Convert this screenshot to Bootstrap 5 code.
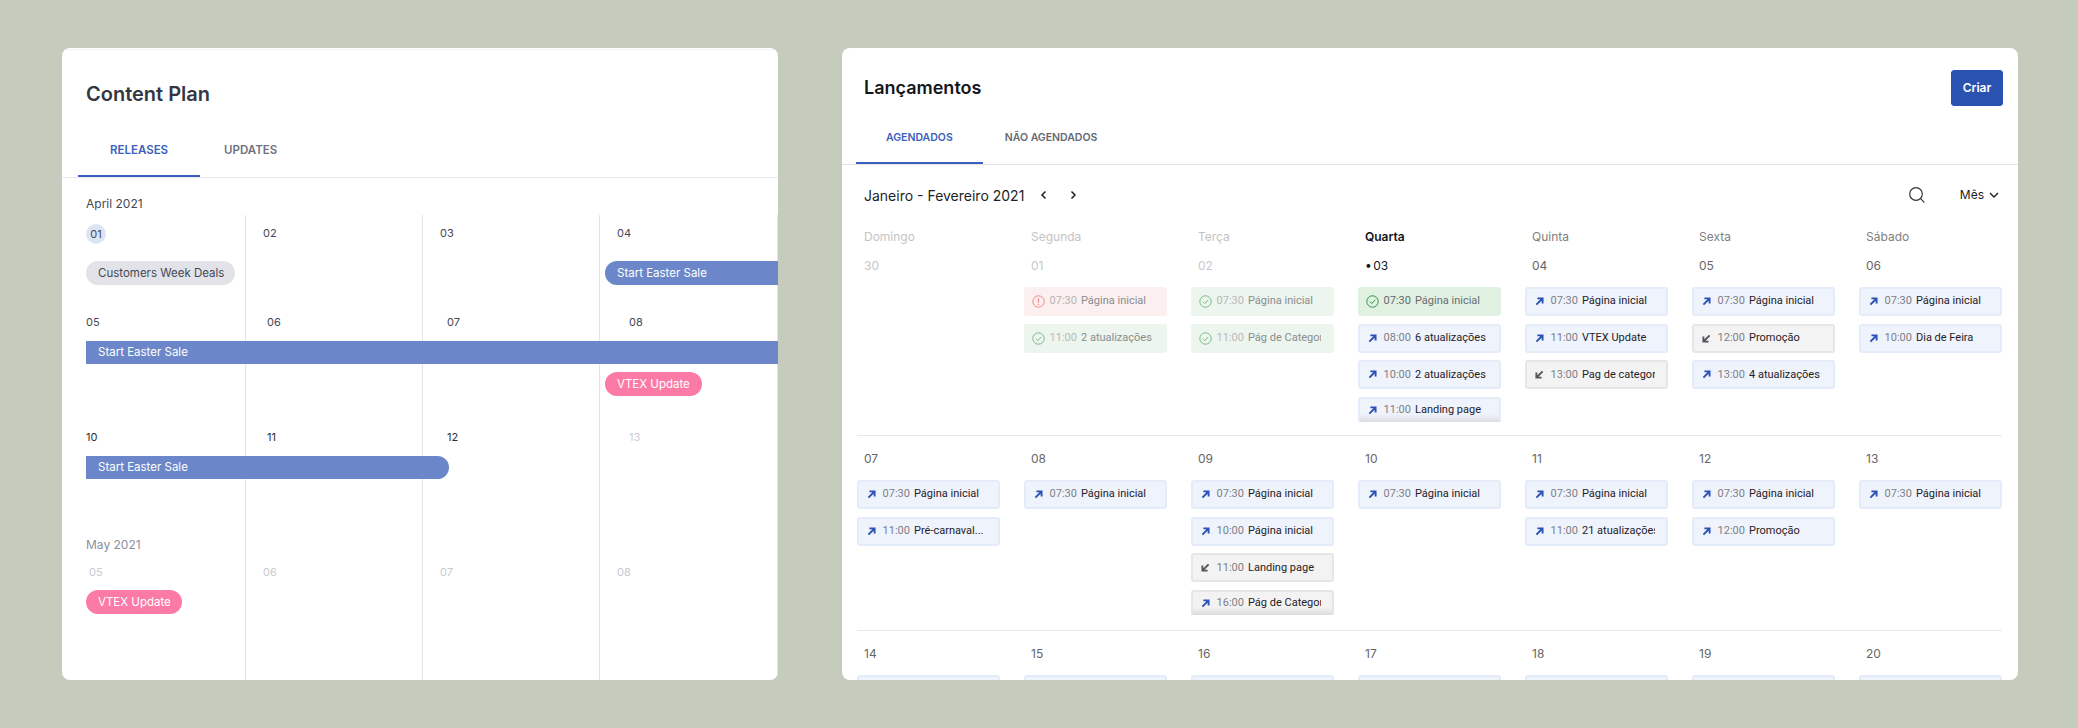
<!DOCTYPE html>
<html lang="en">
<head>
  <meta charset="UTF-8" />
  <title>Content Plan / Lançamentos</title>
  <link href="https://cdn.jsdelivr.net/npm/bootstrap@5.3.3/dist/css/bootstrap.min.css" rel="stylesheet" />
  <style>
    body {
      background-color: #c6ccbd;
      font-family: Inter, "Liberation Sans", sans-serif;
      font-size: 11.5px;
      margin: 0;
      height: 728px;
      overflow: hidden;
      padding: 48px 60px 48px 62px;
      gap: 64px;
    }
    .pn {
      height: 632px;
      border: 0;
      border-radius: 8px;
      overflow: hidden;
      background: #fff;
      flex: none;
    }
    .pn > * { flex: none; }
    .pn-left { width: 716px; }
    .pn-right { width: 1176px; }

    /* tabs */
    .tab-bar { border-bottom: 1px solid #e8e9ee; }
    .tab-lnk {
      font-size: 11.5px;
      line-height: 14px;
      font-weight: 600;
      color: #6f7280;
      border-bottom: 2px solid transparent;
    }
    .tab-lnk.on { color: #3a5fbe; border-bottom-color: #3a5fbe; }

    /* left panel */
    .left-title {
      font-size: 20px;
      line-height: 24px;
      font-weight: 600;
      color: #333743;
      margin: 0;
      padding: 32px 0 0 24px;
      border-top: 1px solid #f1f2f6;
      margin-top: 1px;
    }
    .pn-left .tab-bar { padding-left: 16px; padding-top: 37px; }
    .pn-left .tab-lnk { padding: 0 32px 18px; }
    .pn-left .tab-lnk + .tab-lnk { padding-left: 24px; }
    .month-h { font-size: 12px; line-height: 18px; color: #444854; padding-left: 24px; }
    .month-h.first { margin: 17px 0 2px; }
    .plan-grid {
      display: grid;
      grid-template-columns: 184px 177px 177px 178px;
      grid-template-rows: 46px 24px 56px 23px 32px 60px 23px 76px 35px 24px 66px;
      height: 465px;
    }
    .v-line { grid-row: 1 / -1; border-right: 1px solid #e4e5ea; }
    .v-1 { grid-column: 1; }
    .v-2 { grid-column: 2; }
    .v-3 { grid-column: 3; }
    .v-4 { grid-column: 4; }
    .pd { line-height: 18px; color: #444854; position: relative; font-size: 11px; }
    .pd.dim { color: #c9cad0; }
    .pd.dark { color: #2b2e38; }
    .pd-r1 { grid-row: 1; padding-top: 9px; }
    .pd-r2 { grid-row: 3; padding-top: 28px; }
    .pd-r3 { grid-row: 6; padding-top: 32px; }
    .pd-r4 { grid-row: 9; padding-top: 8px; }
    .c1 { grid-column: 1; padding-left: 24px; }
    .c2 { grid-column: 2; padding-left: 17px; }
    .c3 { grid-column: 3; padding-left: 17px; }
    .c4 { grid-column: 4; padding-left: 17px; }
    .c2w { grid-column: 2; padding-left: 21px; }
    .c3w { grid-column: 3; padding-left: 24px; }
    .c4w { grid-column: 4; padding-left: 29px; }
    .today-dot {
      display: inline-block;
      width: 20px;
      height: 20px;
      line-height: 20px;
      text-align: center;
      border-radius: 50%;
      background: #dde5f5;
      font-size: 11px;
    }
    .pd-today { grid-row: 1; grid-column: 1; padding: 9px 0 0 24px; line-height: 20px; color: #444854; }
    .bar {
      height: 24px;
      line-height: 24px;
      padding-left: 12px;
      color: #fff;
      white-space: nowrap;
      position: relative;
    }
    .bar-blue { background: #6b87c9; }
    .bar-pink { background: #fb7aa6; border-radius: 12px; }
    .bar-grey { background: #e2e3e8; color: #444854; border-radius: 12px; }
    .bar-end { border-radius: 0 12px 12px 0; }
    .bar-start { border-radius: 12px 0 0 12px; }

    /* right panel */
    .right-title { font-size: 18px; line-height: 24px; font-weight: 600; color: #14161c; margin: 0; }
    .right-head { padding: 22px 15px 0 22px; }
    .btn-criar {
      width: 52px;
      height: 36px;
      padding: 0;
      font-size: 12px;
      font-weight: 600;
      background: #2a52b0;
      border-color: #2a52b0;
      border-radius: 3px;
    }
    .pn-right .tab-bar { padding: 25px 0 0 14px; border-bottom-color: #e4e4e4; }
    .pn-right .tab-lnk { padding: 0 30px 17px; font-size: 10.5px; }
    .pn-right .tab-lnk + .tab-lnk { padding-left: 22px; color: #666a72; }
    .tool-row { height: 60px; padding: 0 18px 0 22px; }
    .range-txt { font-size: 14px; color: #1c1e24; margin-right: 10px; }
    .mes-txt { font-size: 12px; color: #1c1e24; }
    .week-grid {
      display: grid;
      grid-template-columns: repeat(7, 143px);
      column-gap: 24px;
      margin-left: 15px;
      width: 1145px;
    }
    .wd { font-size: 12px; line-height: 16px; padding: 4px 0 0 7px; color: #808080; height: 20px; box-sizing: border-box; }
    .wd.dim { color: #c4c4c4; }
    .wd.now { color: #14161c; font-weight: 600; }
    .wk-row {
      grid-column: 1 / -1;
      display: grid;
      grid-template-columns: subgrid;
      border-bottom: 1px solid #e9e9e9;
      align-content: start;
    }
    .wk-1 { height: 191px; }
    .wk-2 { height: 195px; }
    .wk-3 { border-bottom: 0; }
    .day { font-size: 12px; line-height: 16px; color: #666; padding-left: 7px; margin-bottom: 13px; }
    .wk-1 .day { padding-top: 13px; }
    .wk-2 .day, .wk-3 .day { padding-top: 15px; }
    .day.dim { color: #c8c8c8; }
    .day.now { color: #14161c; word-spacing: -2px; }
    .ev {
      height: 29px;
      margin-bottom: 7.7px;
      border: 2px solid #e3ecf8;
      background: #eff3fc;
      border-radius: 3px;
      padding-left: 6px;
      font-family: Roboto, "Liberation Sans", sans-serif;
      font-size: 11px;
      color: #1f2127;
      white-space: nowrap;
      overflow: hidden;
    }
    .ev-ico { width: 13px; height: 13px; flex: none; color: #2c52b5; }
    .ev-t { width: 31.4px; margin-left: 4.6px; flex: none; color: #7d7f85; }
    .ev-n { width: 73px; flex: none; overflow: hidden; }
    .ev-grey { background: #f3f3f3; border-color: #e6e6e6; }
    .ev-grey .ev-ico { color: #55575c; }
    .ev-grey .ev-ico.bl { color: #2c52b5; }
    .ev-ok { background: #ecf5ee; border-color: #ecf5ee; color: #8b8d8f; }
    .ev-ok .ev-t { color: #b7bab8; }
    .ev-ok .ev-ico { color: #79bb87; }
    .ev-err { background: #fbefef; border-color: #fbefef; color: #8b8d8f; }
    .ev-err .ev-t { color: #b7b4b4; }
    .ev-err .ev-ico { color: #ee8a8a; }
    .ev-now { background: #e0f1e2; border-color: #e0f1e2; color: #6b6d70; }
    .ev-now .ev-t { color: #66686b; }
    .ev-now .ev-ico { color: #2e9447; }
    .ev-cut { height: 25px; margin-bottom: 0; border-bottom: 0; border-radius: 3px 3px 0 0; box-shadow: inset 0 -8px 6px -5px #d6d7da; }

    /* where the plan bars sit on the grid */
    .plan-item-a { grid-row: 2; grid-column: 1; margin-left: 24px; width: 149px; }
    .plan-item-b { grid-row: 2; grid-column: 4; margin-left: 5px; }
    .plan-item-c { grid-row: 4; grid-column: 1 / -1; margin-left: 24px; height: 23px; line-height: 23px; }
    .plan-item-d { grid-row: 5; grid-column: 4; margin: 8px 0 0 5px; width: 97px; }
    .plan-item-e { grid-row: 7; grid-column: 1 / 4; margin-left: 24px; width: 363px; height: 23px; line-height: 23px; }
    .plan-item-f { grid-row: 8; grid-column: 1 / 3; padding-top: 56px; line-height: 20px; color: #8c8f9c; position: relative; }
    .plan-item-g { padding-left: 27px; }
    .plan-item-h { grid-row: 10; grid-column: 1; margin-left: 24px; width: 96px; }
    .chev-next { margin-left: 17px; }
    .srch { margin-right: 34px; }
  </style>
</head>
<body class="d-flex">

  <svg width="0" height="0" class="d-none">
    <symbol id="i-up" viewBox="0 0 13 13"><path d="M3.4 9.6L9 4M4.4 3.4h5.2v5.2" fill="none" stroke="currentColor" stroke-width="1.9"/></symbol>
    <symbol id="i-down" viewBox="0 0 13 13"><path d="M9.6 3.4L4 9M3.4 4.4v5.2h5.2" fill="none" stroke="currentColor" stroke-width="1.9"/></symbol>
    <symbol id="i-ok" viewBox="0 0 13 13"><circle cx="6.5" cy="6.5" r="5.7" fill="none" stroke="currentColor" stroke-width="1"/><path d="M3.9 6.7l1.9 1.9 3.4-3.7" fill="none" stroke="currentColor" stroke-width="1"/></symbol>
    <symbol id="i-err" viewBox="0 0 13 13"><circle cx="6.5" cy="6.5" r="5.7" fill="none" stroke="currentColor" stroke-width="1"/><path d="M6.5 3.2v4.2M6.5 8.7v1.2" fill="none" stroke="currentColor" stroke-width="1.2"/></symbol>
  </svg>

  <!-- Content Plan -->
  <div class="card pn pn-left">
    <h1 class="left-title">Content Plan</h1>
    <div class="nav tab-bar">
      <a class="nav-link tab-lnk on" href="#">RELEASES</a>
      <a class="nav-link tab-lnk" href="#">UPDATES</a>
    </div>
    <div class="month-h first">April 2021</div>
    <div class="plan-grid">
      <div class="v-line v-1"></div>
      <div class="v-line v-2"></div>
      <div class="v-line v-3"></div>
      <div class="v-line v-4"></div>

      <div class="pd-today"><span class="today-dot">01</span></div>
      <div class="pd pd-r1 c2">02</div>
      <div class="pd pd-r1 c3">03</div>
      <div class="pd pd-r1 c4">04</div>

      <div class="plan-item-a bar bar-grey">Customers Week Deals</div>
      <div class="plan-item-b bar bar-blue bar-start">Start Easter Sale</div>

      <div class="pd pd-r2 c1">05</div>
      <div class="pd pd-r2 c2w">06</div>
      <div class="pd pd-r2 c3w">07</div>
      <div class="pd pd-r2 c4w">08</div>

      <div class="plan-item-c bar bar-blue">Start Easter Sale</div>
      <div class="plan-item-d bar bar-pink">VTEX Update</div>

      <div class="pd pd-r3 c1 dark">10</div>
      <div class="pd pd-r3 c2w dark">11</div>
      <div class="pd pd-r3 c3w dark">12</div>
      <div class="pd pd-r3 c4w dim">13</div>

      <div class="plan-item-e bar bar-blue bar-end">Start Easter Sale</div>

      <div class="plan-item-f month-h">May 2021</div>

      <div class="pd pd-r4 c1 dim plan-item-g">05</div>
      <div class="pd pd-r4 c2 dim">06</div>
      <div class="pd pd-r4 c3 dim">07</div>
      <div class="pd pd-r4 c4 dim">08</div>

      <div class="plan-item-h bar bar-pink">VTEX Update</div>
    </div>
  </div>

  <!-- Lancamentos -->
  <div class="card pn pn-right">
    <div class="d-flex justify-content-between align-items-center right-head">
      <h2 class="right-title">Lançamentos</h2>
      <button class="btn btn-primary btn-criar">Criar</button>
    </div>
    <div class="nav tab-bar">
      <a class="nav-link tab-lnk on" href="#">AGENDADOS</a>
      <a class="nav-link tab-lnk" href="#">NÃO AGENDADOS</a>
    </div>
    <div class="d-flex align-items-center tool-row">
      <span class="range-txt">Janeiro - Fevereiro 2021</span>
      <svg width="12" height="12" viewBox="0 0 12 12" fill="none" stroke="#1c1e24" stroke-width="1.5" class="ms-1"><path d="M7.5 2.5L4 6l3.5 3.5"/></svg>
      <svg width="12" height="12" viewBox="0 0 12 12" fill="none" stroke="#1c1e24" stroke-width="1.5" class="chev-next"><path d="M4.5 2.5L8 6l-3.5 3.5"/></svg>
      <svg width="18" height="18" viewBox="0 0 18 18" fill="none" stroke="#33353a" stroke-width="1.2" class="ms-auto srch"><circle cx="8" cy="8" r="6.3"/><path d="M12.6 12.6L16.4 16.6"/></svg>
      <span class="mes-txt">Mês</span>
      <svg width="12" height="12" viewBox="0 0 12 12" fill="none" stroke="#1c1e24" stroke-width="1.4" class="ms-1"><path d="M2 4l4 4 4-4"/></svg>
    </div>

    <div class="week-grid">
      <div class="wd dim">Domingo</div>
      <div class="wd dim">Segunda</div>
      <div class="wd dim">Terça</div>
      <div class="wd now">Quarta</div>
      <div class="wd">Quinta</div>
      <div class="wd">Sexta</div>
      <div class="wd">Sábado</div>

      <div class="wk-row wk-1">
        <div><div class="day dim">30</div></div>
        <div>
          <div class="day dim">01</div>
          <div class="ev ev-err d-flex align-items-center"><svg class="ev-ico"><use href="#i-err"/></svg><span class="ev-t">07:30</span><span class="ev-n">Página inicial</span></div>
          <div class="ev ev-ok d-flex align-items-center"><svg class="ev-ico"><use href="#i-ok"/></svg><span class="ev-t">11:00</span><span class="ev-n">2 atualizações</span></div>
        </div>
        <div>
          <div class="day dim">02</div>
          <div class="ev ev-ok d-flex align-items-center"><svg class="ev-ico"><use href="#i-ok"/></svg><span class="ev-t">07:30</span><span class="ev-n">Página inicial</span></div>
          <div class="ev ev-ok d-flex align-items-center"><svg class="ev-ico"><use href="#i-ok"/></svg><span class="ev-t">11:00</span><span class="ev-n">Pág de Categoria</span></div>
        </div>
        <div>
          <div class="day now">• 03</div>
          <div class="ev ev-now d-flex align-items-center"><svg class="ev-ico"><use href="#i-ok"/></svg><span class="ev-t">07:30</span><span class="ev-n">Página inicial</span></div>
          <div class="ev d-flex align-items-center"><svg class="ev-ico"><use href="#i-up"/></svg><span class="ev-t">08:00</span><span class="ev-n">6 atualizações</span></div>
          <div class="ev d-flex align-items-center"><svg class="ev-ico"><use href="#i-up"/></svg><span class="ev-t">10:00</span><span class="ev-n">2 atualizações</span></div>
          <div class="ev ev-cut d-flex align-items-center"><svg class="ev-ico"><use href="#i-up"/></svg><span class="ev-t">11:00</span><span class="ev-n">Landing page</span></div>
        </div>
        <div>
          <div class="day">04</div>
          <div class="ev d-flex align-items-center"><svg class="ev-ico"><use href="#i-up"/></svg><span class="ev-t">07:30</span><span class="ev-n">Página inicial</span></div>
          <div class="ev d-flex align-items-center"><svg class="ev-ico"><use href="#i-up"/></svg><span class="ev-t">11:00</span><span class="ev-n">VTEX Update</span></div>
          <div class="ev ev-grey d-flex align-items-center"><svg class="ev-ico"><use href="#i-down"/></svg><span class="ev-t">13:00</span><span class="ev-n">Pag de categoria</span></div>
        </div>
        <div>
          <div class="day">05</div>
          <div class="ev d-flex align-items-center"><svg class="ev-ico"><use href="#i-up"/></svg><span class="ev-t">07:30</span><span class="ev-n">Página inicial</span></div>
          <div class="ev ev-grey d-flex align-items-center"><svg class="ev-ico"><use href="#i-down"/></svg><span class="ev-t">12:00</span><span class="ev-n">Promoção</span></div>
          <div class="ev d-flex align-items-center"><svg class="ev-ico"><use href="#i-up"/></svg><span class="ev-t">13:00</span><span class="ev-n">4 atualizações</span></div>
        </div>
        <div>
          <div class="day">06</div>
          <div class="ev d-flex align-items-center"><svg class="ev-ico"><use href="#i-up"/></svg><span class="ev-t">07:30</span><span class="ev-n">Página inicial</span></div>
          <div class="ev d-flex align-items-center"><svg class="ev-ico"><use href="#i-up"/></svg><span class="ev-t">10:00</span><span class="ev-n">Dia de Feira</span></div>
        </div>
      </div>

      <div class="wk-row wk-2">
        <div>
          <div class="day">07</div>
          <div class="ev d-flex align-items-center"><svg class="ev-ico"><use href="#i-up"/></svg><span class="ev-t">07:30</span><span class="ev-n">Página inicial</span></div>
          <div class="ev d-flex align-items-center"><svg class="ev-ico"><use href="#i-up"/></svg><span class="ev-t">11:00</span><span class="ev-n">Pré-carnaval...</span></div>
        </div>
        <div>
          <div class="day">08</div>
          <div class="ev d-flex align-items-center"><svg class="ev-ico"><use href="#i-up"/></svg><span class="ev-t">07:30</span><span class="ev-n">Página inicial</span></div>
        </div>
        <div>
          <div class="day">09</div>
          <div class="ev d-flex align-items-center"><svg class="ev-ico"><use href="#i-up"/></svg><span class="ev-t">07:30</span><span class="ev-n">Página inicial</span></div>
          <div class="ev d-flex align-items-center"><svg class="ev-ico"><use href="#i-up"/></svg><span class="ev-t">10:00</span><span class="ev-n">Página inicial</span></div>
          <div class="ev ev-grey d-flex align-items-center"><svg class="ev-ico"><use href="#i-down"/></svg><span class="ev-t">11:00</span><span class="ev-n">Landing page</span></div>
          <div class="ev ev-grey ev-cut d-flex align-items-center"><svg class="ev-ico bl"><use href="#i-up"/></svg><span class="ev-t">16:00</span><span class="ev-n">Pág de Categoria</span></div>
        </div>
        <div>
          <div class="day">10</div>
          <div class="ev d-flex align-items-center"><svg class="ev-ico"><use href="#i-up"/></svg><span class="ev-t">07:30</span><span class="ev-n">Página inicial</span></div>
        </div>
        <div>
          <div class="day">11</div>
          <div class="ev d-flex align-items-center"><svg class="ev-ico"><use href="#i-up"/></svg><span class="ev-t">07:30</span><span class="ev-n">Página inicial</span></div>
          <div class="ev d-flex align-items-center"><svg class="ev-ico"><use href="#i-up"/></svg><span class="ev-t">11:00</span><span class="ev-n">21 atualizações</span></div>
        </div>
        <div>
          <div class="day">12</div>
          <div class="ev d-flex align-items-center"><svg class="ev-ico"><use href="#i-up"/></svg><span class="ev-t">07:30</span><span class="ev-n">Página inicial</span></div>
          <div class="ev d-flex align-items-center"><svg class="ev-ico"><use href="#i-up"/></svg><span class="ev-t">12:00</span><span class="ev-n">Promoção</span></div>
        </div>
        <div>
          <div class="day">13</div>
          <div class="ev d-flex align-items-center"><svg class="ev-ico"><use href="#i-up"/></svg><span class="ev-t">07:30</span><span class="ev-n">Página inicial</span></div>
        </div>
      </div>

      <div class="wk-row wk-3">
        <div><div class="day">14</div><div class="ev"></div></div>
        <div><div class="day">15</div><div class="ev"></div></div>
        <div><div class="day">16</div><div class="ev"></div></div>
        <div><div class="day">17</div><div class="ev"></div></div>
        <div><div class="day">18</div><div class="ev"></div></div>
        <div><div class="day">19</div><div class="ev"></div></div>
        <div><div class="day">20</div><div class="ev"></div></div>
      </div>
    </div>
  </div>

</body>
</html>
